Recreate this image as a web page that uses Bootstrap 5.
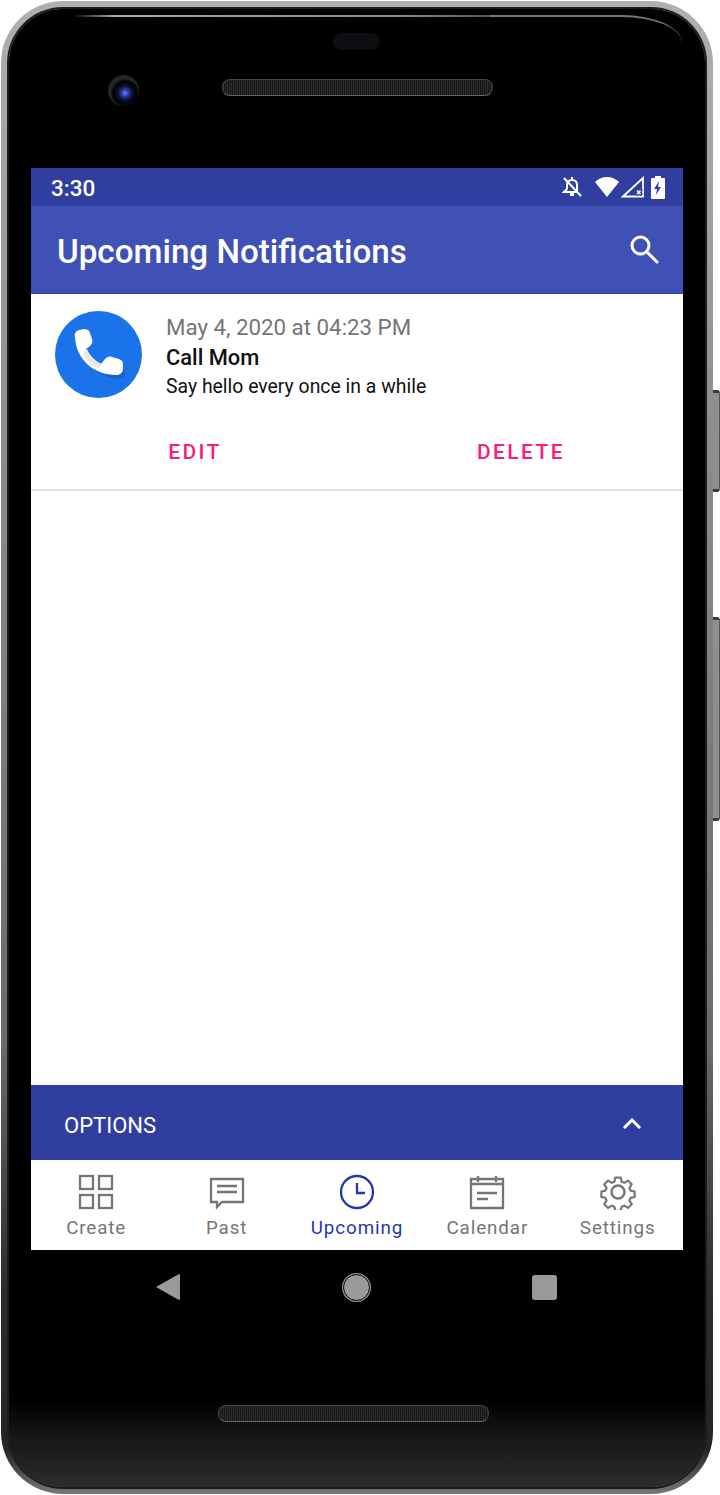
<!DOCTYPE html>
<html lang="en">
<head>
  <meta charset="UTF-8">
  <meta name="viewport" content="width=device-width, initial-scale=1.0">
  <title>Upcoming Notifications</title>
  <link href="https://cdn.jsdelivr.net/npm/bootstrap@5.3.3/dist/css/bootstrap.min.css" rel="stylesheet">
  <style>
    html, body { height: 1495px; overflow: hidden; }
    body { background: #fff; font-family: Roboto, "Liberation Sans", sans-serif; }

    /* phone hardware */
    .phone-shell { position: relative; width: 720px; height: 1495px; padding: 1px 7px 1px 1px; }
    .phone-rim {
      height: 100%; padding: 8px 8px 7px 8px; border-radius: 62px;
      background: linear-gradient(180deg, #b0b0b0 0, #8c8c8c 30%, #6a6a6a 70%, #2e2e2e 86%, #242424 97%, #777 100%);
    }
    .phone-face {
      height: 100%; padding: 159px 21px 0 22px; border-radius: 54px;
      background: linear-gradient(180deg, #000 0, #000 94%, #161616 96.500%, #2c2c2c 100%);
      box-shadow: 0 0 0 2px #1c1c1c;
    }
    .glare { position: absolute; left: 72px; top: 15px; width: 420px; height: 2px; background: linear-gradient(90deg, #000, #aaa 10%, #888 80%, #555); }
    .glare-corner { position: absolute; left: 490px; top: 15px; width: 192px; height: 30px; border-top: 2px solid #777; border-top-right-radius: 60px 28px; }
    .earpiece { position: absolute; left: 333px; top: 33px; width: 47px; height: 17px; border-radius: 9px; background: #0d0d12; }
    .speaker-grille { position: absolute; left: 222px; width: 271px; height: 17px; border-radius: 8px; border: 1px solid #444; border-bottom-color: #666;
      background: repeating-linear-gradient(90deg, #2c2c2c 0 1px, #161616 1px 2px); }
    .speaker-top { top: 79px; }
    .speaker-bottom { left: 218px; top: 1405px; }
    .front-camera { position: absolute; left: 108px; top: 75px; width: 31px; height: 31px; border-radius: 50%;
      background: radial-gradient(circle at 55% 58%, #6f84ee 0, #2c3aa0 14%, #0a0f30 30%, #050505 42%, #050505 50%, #262626 58%, #1c1c1c 100%); }
    .side-key { position: absolute; right: 0; width: 7px; border-radius: 0 3px 3px 0; background: #8f8f8f; border: 1px solid #555; border-left: 0; border-top: 3px solid #3a3a3a; border-bottom: 3px solid #3a3a3a; }
    .key-power { top: 390px; height: 102px; }
    .key-volume { top: 617px; height: 204px; }

    /* screen */
    .app-screen { height: 1082px; width: 652px; background: #fff; }
    .status-strip { height: 38px; background: #303f9f; color: #fff; padding: 0 18px 0 20px; font-size: 22.5px; font-weight: 500; }
    .status-time { padding-top: 3px; }
    .status-wifi { margin: 0 2px 0 13px; }
    .status-battery { margin-left: 6px; }
    .app-toolbar { height: 88px; background: #3f51b5; color: #fff; padding: 0 24px 0 26px; border-bottom: 1px solid #2b3ea5; }
    .app-title { font-size: 33.2px; font-weight: 500; margin: 0; line-height: 1; padding-top: 4px; }
    .search-glyph { margin-bottom: 2px; }
    .notice-row { height: 197px; border-bottom: 2px solid #e2e2e2; }
    .notice-top { padding: 17px 24px 0; gap: 24px; }
    .call-avatar { width: 87px; height: 87px; flex: none; border-radius: 50%; background: #1a73e8; }
    .notice-date { font-size: 22.3px; color: #757575; line-height: 30px; margin-top: 1px; }
    .notice-title { font-size: 21.9px; font-weight: 500; color: #111; line-height: 30px; margin-top: 1px; }
    .notice-body { font-size: 19.4px; color: #111; line-height: 27px; }
    .action-btn { color: #ff1a78; font-size: 21px; font-weight: 500; letter-spacing: 2.4px; padding: 0 0 0 2px; border: 0; }
    .action-row { margin-top: 37px; }
    .options-bar { height: 75px; background: #303f9f; color: #fff; padding: 0 41px 0 33px; font-size: 22px; }
    .options-label { padding-top: 5px; }
    .tab-strip { height: 90px; background: #fff; }
    .tab-item { width: 20%; color: #757575; font-size: 18.800px; letter-spacing: .9px; padding-top: 14px; text-decoration: none; line-height: 1; }
    .tab-item svg { display: block; margin-bottom: 9px; }
    .tab-active { color: #1f3aa8; }
    .soft-keys { height: 74px; padding: 0 127px 0 125px; }
    .soft-back { width: 25px; height: 28px; }
    .soft-home { width: 27px; height: 27px; border-radius: 50%; background: #9a9a9a; border: 1px solid #000; box-shadow: 0 0 0 1px #9a9a9a; }
    .soft-recent { width: 25px; height: 25px; border-radius: 3px; background: #9a9a9a; }
  </style>
</head>
<body>
  <div class="phone-shell">
    <div class="phone-rim">
      <div class="phone-face">
        <div class="app-screen d-flex flex-column">
          <div class="status-strip d-flex align-items-center justify-content-between">
            <span class="status-time">3:30</span>
            <span class="d-flex align-items-center">
              <svg width="20" height="22" viewBox="0 0 20 22" fill="none" stroke="#fff" stroke-width="2"><path d="M5 9c0-3 2-5 5-5s5 2 5 5v6M15 16H2l3-3V9"/><path d="M8 18.500h4" stroke-width="3"/><path d="M10 1v3"/><path d="M2 2l17 18"/></svg>
              <svg class="status-wifi" width="24" height="20" viewBox="0 0 24 20" fill="#fff"><path d="M12 20L0 5c3-3 7-5 12-5s9 2 12 5z"/></svg>
              <svg width="24" height="22" viewBox="0 0 24 22" fill="none" stroke="#fff" stroke-width="1.800"><path d="M22 2L2 20.500h20z"/><path d="M15 13l6 6M21 13l-6 6" stroke="#303f9f" stroke-width="3"/><path d="M16 14.500l3.500 3.500M19.500 14.500L16 18" stroke-width="1.500"/></svg>
              <svg class="status-battery" width="14" height="23" viewBox="0 0 14 23"><path fill="#fff" d="M4 0h6v2h3a1 1 0 0 1 1 1v19a1 1 0 0 1-1 1H1a1 1 0 0 1-1-1V3a1 1 0 0 1 1-1h3z"/><path fill="#303f9f" d="M8 5L3 13h3l-1 6 5-8H7z"/></svg>
            </span>
          </div>

          <div class="app-toolbar d-flex align-items-center justify-content-between">
            <h1 class="app-title">Upcoming Notifications</h1>
            <svg class="search-glyph" width="30" height="30" viewBox="0 0 30 30" fill="none" stroke="#fff" stroke-width="3"><circle cx="11.500" cy="11.500" r="8.500"/><path d="M18 18l10 10" stroke-linecap="round"/></svg>
          </div>

          <div class="notice-row">
            <div class="notice-top d-flex">
              <div class="call-avatar">
                <svg width="87" height="87" viewBox="0 0 87 87">
                  <path fill="#174ea6" opacity=".45" d="M24 27c0 22 20 42 44 41 4-8 1-13-5-14l-7-1-4 5C41 55 33 46 31 38l5-4-2-9z"/>
                  <path fill="#fff" d="M20 26c-1-3 1-6 4-7l5-1c3 0 5 1 6 4l2 6c1 3 0 5-2 7l-4 3c3 7 8 12 15 15l4-5c2-2 4-3 7-2l7 2c3 1 4 3 4 6v4c0 3-3 6-6 6-24 0-41-16-42-38z"/>
                  <path fill="#e8e8e8" d="M32 38c3 7 8 12 15 15l-3 5c-7-3-13-8-16-16z"/>
                </svg>
              </div>
              <div>
                <div class="notice-date">May 4, 2020 at 04:23 PM</div>
                <div class="notice-title">Call Mom</div>
                <div class="notice-body">Say hello every once in a while</div>
              </div>
            </div>
            <div class="row g-0 action-row text-center">
              <div class="col-6"><button type="button" class="btn action-btn">EDIT</button></div>
              <div class="col-6"><button type="button" class="btn action-btn">DELETE</button></div>
            </div>
          </div>

          <div class="flex-grow-1"></div>

          <div class="options-bar d-flex align-items-center justify-content-between">
            <span class="options-label">OPTIONS</span>
            <svg width="20" height="12" viewBox="0 0 20 12" fill="none" stroke="#fff" stroke-width="3"><path d="M2 11l8-8 8 8"/></svg>
          </div>

          <nav class="tab-strip nav">
            <a class="tab-item d-flex flex-column align-items-center" href="#">
              <svg width="36" height="36" viewBox="0 0 36 36" fill="none" stroke="#757575" stroke-width="2.300"><rect x="2" y="2" width="13" height="13"/><rect x="21" y="2" width="13" height="13"/><rect x="2" y="21" width="13" height="13"/><rect x="21" y="21" width="13" height="13"/></svg>
              Create</a>
            <a class="tab-item d-flex flex-column align-items-center" href="#">
              <svg width="36" height="36" viewBox="0 0 36 36" fill="none" stroke="#757575" stroke-width="2.300"><path d="M2 5h32v23H13l-5 5v-5H2z"/><path d="M8 12h20M8 18h20"/></svg>
              Past</a>
            <a class="tab-item tab-active d-flex flex-column align-items-center" href="#">
              <svg width="36" height="36" viewBox="0 0 36 36" fill="none" stroke="#1f3aa8" stroke-width="2.300"><circle cx="18" cy="18" r="16"/><path d="M18 9v10h8"/></svg>
              Upcoming</a>
            <a class="tab-item d-flex flex-column align-items-center" href="#">
              <svg width="36" height="36" viewBox="0 0 36 36" fill="none" stroke="#757575" stroke-width="2.300"><path d="M2 5h32v29H2zM2 10h32M9 2v6M27 2v6"/><path d="M8 19h20M8 25h11"/></svg>
              Calendar</a>
            <a class="tab-item d-flex flex-column align-items-center" href="#">
              <svg width="36" height="36" viewBox="0 0 36 36" fill="none" stroke="#757575" stroke-width="2.400" stroke-linejoin="round"><circle cx="18" cy="18" r="6.500"/><path d="M15 2h6l1 4.500 3 1.300 4-2.500 4.200 4.200-2.500 4 1.300 3 4.500 1v6l-4.500 1-1.300 3 2.500 4-4.200 4.200-4-2.500-3 1.300-1 4.500h-6l-1-4.500-3-1.300-4 2.500-4.200-4.200 2.500-4-1.300-3-4.500-1v-6l4.500-1 1.300-3-2.500-4 4.200-4.200 4 2.500 3-1.300z" transform="translate(1.800 1.800) scale(.9)"/></svg>
              Settings</a>
          </nav>
        </div>

        <div class="soft-keys d-flex justify-content-between align-items-center">
          <svg class="soft-back" viewBox="0 0 25 28"><path fill="#9a9a9a" d="M0 14L23 1a1 1 0 0 1 1 1v24a1 1 0 0 1-1 1z"/></svg>
          <div class="soft-home"></div>
          <div class="soft-recent"></div>
        </div>
      </div>
    </div>

    <div class="glare"></div>
    <div class="glare-corner"></div>
    <div class="earpiece"></div>
    <div class="speaker-grille speaker-top"></div>
    <div class="speaker-grille speaker-bottom"></div>
    <div class="front-camera"></div>
    <div class="side-key key-power"></div>
    <div class="side-key key-volume"></div>
  </div>

  <script src="https://cdn.jsdelivr.net/npm/bootstrap@5.3.3/dist/js/bootstrap.bundle.min.js"></script>
</body>
</html>
